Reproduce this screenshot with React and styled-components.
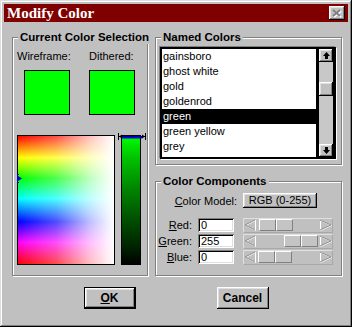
import React from "react";
import styled, { createGlobalStyle } from "styled-components";

const GlobalStyle = createGlobalStyle`
  html, body {
    margin: 0;
    padding: 0;
    background: #c0c0c0;
  }
  body {
    font-family: "Liberation Sans", Arial, sans-serif;
    font-size: 11px;
    color: #000;
  }
`;

const raised = `
  background: #c0c0c0;
  box-shadow: inset -1px -1px #000, inset 1px 1px #fff, inset -2px -2px #808080, inset 2px 2px #dfdfdf;
`;

const Window = styled.div`
  box-sizing: border-box;
  width: 352px;
  height: 327px;
  padding: 4px;
  background: #c0c0c0;
  box-shadow: inset -1px -1px #000, inset 1px 1px #dfdfdf, inset -2px -2px #808080, inset 2px 2px #fff;
  display: flex;
  flex-direction: column;
`;

const TitleBar = styled.div`
  height: 18px;
  background: #800000;
  display: flex;
  align-items: center;
  justify-content: space-between;
  padding: 0 3px;
`;

const Title = styled.span`
  font-family: "Liberation Serif", "Times New Roman", serif;
  font-weight: bold;
  font-size: 15px;
  color: #fff;
  line-height: 18px;
`;

const CloseButton = styled.div`
  width: 16px;
  height: 14px;
  ${raised}
  display: flex;
  align-items: center;
  justify-content: center;
`;

const Main = styled.div`
  display: grid;
  grid-template-columns: 136px 187px;
  column-gap: 7px;
  padding: 8px 0 0 8px;
`;

const Group = styled.fieldset`
  margin: 0;
  padding: 0;
  min-width: 0;
  border: 1px solid #808080;
  box-shadow: 1px 1px 0 #fff, inset 1px 1px 0 #fff;
`;

const Legend = styled.legend`
  margin-left: 5px;
  padding: 0 2px;
  font-weight: bold;
  font-size: 11.5px;
  line-height: 14px;
  white-space: nowrap;
  background: #c0c0c0;
`;

const LeftBody = styled.div`
  padding: 6px 4px 10px 4px;
`;

const PairRow = styled.div`
  display: grid;
  grid-template-columns: 72px auto;
  margin-top: ${(p) => p.$gap || 0}px;
`;

const Caption = styled.span`
  line-height: 13px;
  height: 13px;
`;

const Swatch = styled.div`
  box-sizing: border-box;
  width: 46px;
  height: 45px;
  margin-left: ${(p) => p.$indent || 0}px;
  background: #00ff00;
  border: 1px solid #000;
`;

const PickerRow = styled.div`
  display: flex;
  gap: 6px;
  margin-top: 20px;
`;

const Spectrum = styled.div`
  position: relative;
  box-sizing: border-box;
  width: 98px;
  height: 130px;
  border: 1px solid #000;
  background:
    linear-gradient(to right, rgba(255, 255, 255, 0) 0%, rgba(255, 255, 255, 0.3) 40%, rgba(255, 255, 255, 0.75) 75%, #fff 100%),
    linear-gradient(to bottom, #ff0000 0%, #ffff00 17%, #00ff00 33%, #00ffff 49%, #0000ff 67%, #ff00ff 83%, #ff0000 100%);
`;

const HueMarker = styled.svg`
  position: absolute;
  left: -1px;
  top: 38px;
`;

const ValueBar = styled.div`
  position: relative;
  box-sizing: border-box;
  width: 20px;
  height: 130px;
  border: 1px solid #000;
  background: linear-gradient(to bottom, #00ff00 0%, #00c000 18%, #008800 40%, #005000 65%, #002000 88%, #000 100%);
`;

const ValueMarker = styled.svg`
  position: absolute;
  left: -4px;
  top: -3px;
`;

const RightColumn = styled.div`
  display: flex;
  flex-direction: column;
  gap: 9px;
`;

const NamedBody = styled.div`
  padding: 3px 5px 5px 4px;
`;

const ListBox = styled.div`
  display: flex;
  box-sizing: border-box;
  height: 112px;
  border: 2px solid #000;
  box-shadow: -1px -1px 0 #808080, 1px 1px 0 #fff;
`;

const Items = styled.div`
  flex: 1;
  background: #fff;
  overflow: hidden;
`;

const Item = styled.div`
  height: 15px;
  line-height: 15px;
  padding-left: 1px;
  background: ${(p) => (p.$selected ? "#000" : "transparent")};
  color: ${(p) => (p.$selected ? "#fff" : "#000")};
`;

const ScrollBar = styled.div`
  box-sizing: border-box;
  width: 18px;
  border-left: 3px solid #000;
  border-right: 1px solid #000;
  display: flex;
  flex-direction: column;
  background: #c8c8c8;
`;

const ScrollButton = styled.div`
  height: 13px;
  ${raised}
  display: flex;
  align-items: center;
  justify-content: center;
`;

const ScrollTrack = styled.div`
  flex: 1;
  padding-top: 20px;
`;

const ScrollThumb = styled.div`
  height: 14px;
  ${raised}
`;

const ComponentsBody = styled.div`
  padding: 5px 0 10px 4px;
`;

const FieldGrid = styled.div`
  display: grid;
  grid-template-columns: 38px 45px 90px;
  grid-auto-rows: 16px;
  align-items: center;
  margin-top: 9px;
`;

const ModelRow = styled.div`
  display: grid;
  grid-template-columns: 83px 90px;
  align-items: center;
  height: 15px;
`;

const FieldLabel = styled.span`
  justify-self: end;
  padding-right: 6px;
`;

const Key = styled.span`
  text-decoration: underline;
`;

const ModelButton = styled.div`
  box-sizing: border-box;
  width: 74px;
  height: 15px;
  line-height: 15px;
  text-align: center;
  ${raised}
`;

const ValueInput = styled.input`
  box-sizing: border-box;
  width: 36px;
  height: 14px;
  margin: 0;
  padding: 0 0 0 3px;
  border: none;
  outline: none;
  background: #fff;
  font: 11px "Liberation Sans", Arial, sans-serif;
  color: #000;
  box-shadow: inset 1px 1px #808080, inset -1px -1px #fff, inset 2px 2px #000, inset -2px -2px #dfdfdf;
`;

const Slider = styled.div`
  box-sizing: border-box;
  display: flex;
  align-items: center;
  width: 90px;
  height: 15px;
  border: 1px solid #e0e0e0;
  border-right-color: #a8a8a8;
  border-bottom-color: #a8a8a8;
`;

const SliderThumb = styled.div`
  display: flex;
  margin-left: ${(p) => p.$offset}px;
`;

const ThumbCell = styled.div`
  box-sizing: border-box;
  width: 17px;
  height: 12px;
  border: 1px solid;
  border-color: #fff #808080 #808080 #fff;
  background: #c4c4c4;
`;

const Spacer = styled.div`
  flex: 1;
`;

const Footer = styled.div`
  display: flex;
  justify-content: center;
  gap: 81px;
  margin-top: 11px;
`;

const DialogButton = styled.div`
  box-sizing: border-box;
  width: 52px;
  height: 22px;
  display: flex;
  align-items: center;
  justify-content: center;
  font-weight: bold;
  font-size: 12px;
  ${raised}
  border: ${(p) => (p.$default ? "1px solid #000" : "none")};
`;

const colorNames = ["gainsboro", "ghost white", "gold", "goldenrod", "green", "green yellow", "grey"];

const channels = [
  { key: "R", rest: "ed:", value: "0", offset: 3 },
  { key: "G", rest: "reen:", value: "255", offset: 28 },
  { key: "B", rest: "lue:", value: "0", offset: 2 },
];

const ArrowLeft = () => (
  <svg width="12" height="12" viewBox="0 0 12 12">
    <polyline points="11,1 1,6 11,11 11,1" fill="none" stroke="#fff" strokeWidth="1" transform="translate(0.5,0.5)" />
    <polyline points="11,1 1,6 11,11" fill="none" stroke="#909090" strokeWidth="1" />
  </svg>
);

const ArrowRight = () => (
  <svg width="13" height="12" viewBox="0 0 13 12">
    <polyline points="1,1 12,6 1,11 1,1" fill="none" stroke="#fff" strokeWidth="1" transform="translate(0.5,0.5)" />
    <polyline points="1,1 12,6 1,11" fill="none" stroke="#909090" strokeWidth="1" />
  </svg>
);

const App = () => (
  <>
    <GlobalStyle />
    <Window>
      <TitleBar>
        <Title>Modify Color</Title>
        <CloseButton>
          <svg width="10" height="9" viewBox="0 0 10 9">
            <path d="M2 2 L9 8 M9 2 L2 8" stroke="#fff" strokeWidth="2" />
            <path d="M1 1 L8 7 M8 1 L1 7" stroke="#808080" strokeWidth="2" />
          </svg>
        </CloseButton>
      </TitleBar>

      <Main>
        <Group>
          <Legend>Current Color Selection</Legend>
          <LeftBody>
            <PairRow>
              <Caption>Wireframe:</Caption>
              <Caption>Dithered:</Caption>
            </PairRow>
            <PairRow $gap={7}>
              <Swatch $indent={7} />
              <Swatch />
            </PairRow>
            <PickerRow>
              <Spectrum>
                <HueMarker width="6" height="9" viewBox="0 0 6 9">
                  <path d="M0.5 0 V9 M0 0.5 H2 M0 8.5 H2" stroke="#0000c0" strokeWidth="1" />
                  <path d="M1 2 L5 4.5 L1 7 Z" fill="#0000c0" />
                </HueMarker>
              </Spectrum>
              <ValueBar>
                <ValueMarker width="28" height="7" viewBox="0 0 28 7">
                  <path d="M1 3.5 H27" stroke="#000" strokeWidth="1" />
                  <path d="M0.5 0 V7 M27.5 0 V7" stroke="#000" strokeWidth="1" />
                  <path d="M1 3.5 L4 1.5 V5.5 Z M27 3.5 L24 1.5 V5.5 Z" fill="#000" />
                  <path d="M4 4.5 H24" stroke="#0000ff" strokeWidth="2" />
                </ValueMarker>
              </ValueBar>
            </PickerRow>
          </LeftBody>
        </Group>

        <RightColumn>
          <Group>
            <Legend>Named Colors</Legend>
            <NamedBody>
              <ListBox>
                <Items>
                  {colorNames.map((name) => (
                    <Item key={name} $selected={name === "green"}>
                      {name}
                    </Item>
                  ))}
                </Items>
                <ScrollBar>
                  <ScrollButton>
                    <svg width="7" height="7" viewBox="0 0 7 7">
                      <path d="M3.5 0 L7 4 H5 V7 H2 V4 H0 Z" fill="#000" />
                    </svg>
                  </ScrollButton>
                  <ScrollTrack>
                    <ScrollThumb />
                  </ScrollTrack>
                  <ScrollButton>
                    <svg width="7" height="7" viewBox="0 0 7 7">
                      <path d="M3.5 7 L7 3 H5 V0 H2 V3 H0 Z" fill="#000" />
                    </svg>
                  </ScrollButton>
                </ScrollBar>
              </ListBox>
            </NamedBody>
          </Group>

          <Group>
            <Legend>Color Components</Legend>
            <ComponentsBody>
              <ModelRow>
                <FieldLabel>
                  <Key>C</Key>olor Model:
                </FieldLabel>
                <ModelButton>RGB (0-255)</ModelButton>
              </ModelRow>
              <FieldGrid>
                {channels.map((c) => (
                  <React.Fragment key={c.key}>
                    <FieldLabel>
                      <Key>{c.key}</Key>
                      {c.rest}
                    </FieldLabel>
                    <ValueInput readOnly defaultValue={c.value} />
                    <Slider>
                      <ArrowLeft />
                      <SliderThumb $offset={c.offset}>
                        <ThumbCell />
                        <ThumbCell />
                      </SliderThumb>
                      <Spacer />
                      <ArrowRight />
                    </Slider>
                  </React.Fragment>
                ))}
              </FieldGrid>
            </ComponentsBody>
          </Group>
        </RightColumn>
      </Main>

      <Footer>
        <DialogButton $default>
          <Key>O</Key>K
        </DialogButton>
        <DialogButton>Cancel</DialogButton>
      </Footer>
    </Window>
  </>
);

export default App;
